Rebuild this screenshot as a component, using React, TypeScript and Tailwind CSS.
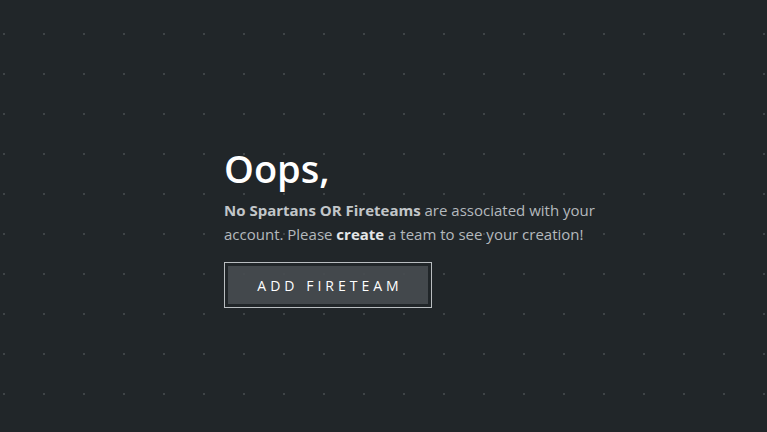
export default function App() {
  return (
    <div
      className="min-h-screen w-full bg-[#212629] bg-[radial-gradient(circle,#3f4447_1px,transparent_1.2px)] bg-[size:40px_40px] bg-[position:-16px_14px] font-['Open_Sans',sans-serif]"
    >
      <div className="flex flex-col items-start pl-[224px] pt-[144px]">
        <h1 className="text-[38px] font-semibold leading-[48px] text-white">Oops,</h1>
        <p className="mt-[6px] w-[390px] text-[15px] leading-[24px] text-[#b4b9bd]">
          <span className="font-bold text-[#c2c6c9]">No Spartans OR Fireteams</span> are associated with your account.
          Please <span className="font-bold text-[#e4e6e8]">create</span> a team to see your creation!
        </p>
        <button className="mt-[16px] border border-[#b9bdc0] p-[3px]">
          <span className="flex h-[38px] w-[200px] items-center justify-center bg-[#474c50]/90 pl-[4px] text-[14px] tracking-[4px] text-white">
            ADD FIRETEAM
          </span>
        </button>
      </div>
    </div>
  );
}
